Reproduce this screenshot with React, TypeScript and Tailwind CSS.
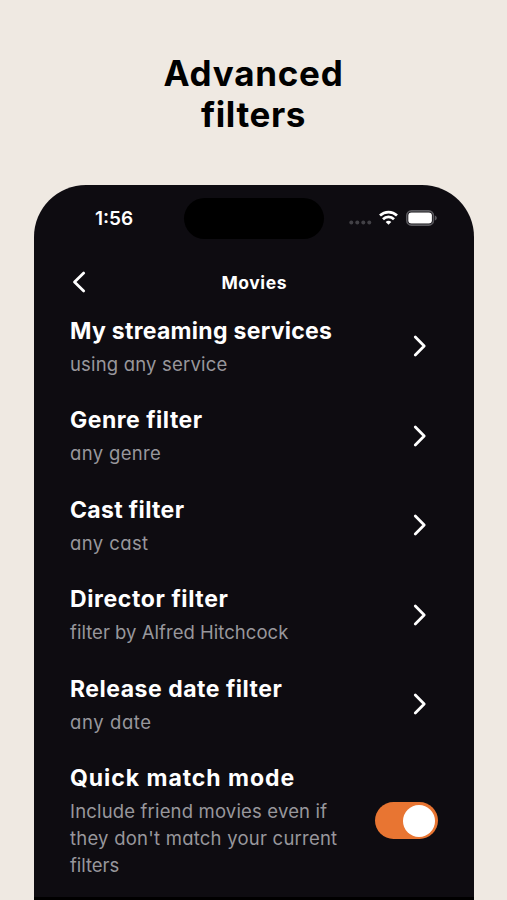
interface Filter {
  title: string;
  titleSpacing: string;
  value: string;
  valueSpacing: string;
}

const filters: Filter[] = [
  { title: 'My streaming services', titleSpacing: 'tracking-[0.28px]', value: 'using any service', valueSpacing: 'tracking-[0.18px]' },
  { title: 'Genre filter', titleSpacing: 'tracking-[0.5px]', value: 'any genre', valueSpacing: 'tracking-[0.35px]' },
  { title: 'Cast filter', titleSpacing: 'tracking-[0.35px]', value: 'any cast', valueSpacing: 'tracking-[0.4px]' },
  { title: 'Director filter', titleSpacing: 'tracking-[0.6px]', value: 'filter by Alfred Hitchcock', valueSpacing: 'tracking-[0.03px]' },
  { title: 'Release date filter', titleSpacing: 'tracking-[0.51px]', value: 'any date', valueSpacing: 'tracking-[0.6px]' },
];

function StatusBar() {
  return (
    <div className="flex h-[41px] items-center">
      <span className="ml-[61px] w-[89px] text-[19px] leading-[41px] font-semibold">1:56</span>
      <div className="h-[41px] w-[140px] rounded-full bg-black" />
      {/* Signal, wifi and battery */}
      <div className="ml-[25px] flex items-center">
        <svg width="23" height="16" viewBox="0 0 23 16" fill="#424146" className="-mt-[2px]">
          <circle cx="2.3" cy="12.5" r="2" />
          <circle cx="8.3" cy="12.5" r="2" />
          <circle cx="14.3" cy="12.5" r="2" />
          <circle cx="20.3" cy="12.5" r="2" />
        </svg>
        <svg width="19" height="15" viewBox="0 0 19 15" className="ml-[7px] -mt-[2px]">
          <g fill="none" stroke="#fff" strokeWidth="2.7">
            <path d="M1 5.5a12.2 12.2 0 0 1 17 0" />
            <path d="M4 9.2a7.7 7.7 0 0 1 11 0" />
          </g>
          <path d="M9.5 14.8 6.7 11.9a3.9 3.9 0 0 1 5.6 0z" fill="#fff" />
        </svg>
        <svg width="31" height="16" viewBox="0 0 31 16" className="ml-[8px] -mt-[2px]">
          <rect x="0.8" y="0.9" width="26.6" height="14.2" rx="4.6" fill="none" stroke="#5a595e" strokeWidth="1.6" />
          <rect x="2.3" y="2.6" width="23.6" height="10.8" rx="3" fill="#fff" />
          <path d="M28.9 5.6c1.3.5 1.9 1.4 1.9 2.4s-.6 1.9-1.9 2.4z" fill="#5a595e" />
        </svg>
      </div>
    </div>
  );
}

function Chevron({ left = false }: { left?: boolean }) {
  return (
    <svg width="14" height="22" viewBox="0 0 14 22" fill="none" stroke="#fff" strokeWidth="2.8" strokeLinecap="round" strokeLinejoin="round" className="-mt-[2px]">
      <path d={left ? 'M11.7 2.1 2.5 11l9.2 8.9' : 'M2.3 2.1 11.2 11l-8.9 8.9'} />
    </svg>
  );
}

export default function App() {
  return (
    <div className="h-[900px] w-full overflow-hidden bg-[#efe9e2] pt-[53px] font-['Inter',sans-serif] text-white">
      <h1 className="flex flex-col items-center text-[35px] leading-[41px] font-bold text-black">
        <span className="tracking-[0.75px]">Advanced</span>
        <span className="tracking-[0.6px]">filters</span>
      </h1>

      {/* Phone */}
      <div className="mt-[49.5px] ml-[34px] h-[715.5px] w-[439.5px] rounded-t-[52px] border-b-3 border-black bg-[#0e0c11] pt-[13.5px]">
        <StatusBar />

        <header className="mt-[31px] flex h-[26px] items-center pr-[37px] pl-[38px]">
          <Chevron left />
          <h2 className="flex-1 pr-[14px] text-center text-[17.5px] font-bold tracking-[0.55px]">Movies</h2>
        </header>

        <div className="mt-[20.5px] flex flex-col gap-[28.5px] px-9">
          {filters.map((f) => (
            <div key={f.title} className="flex items-center justify-between pr-[11px]">
              <div>
                <h3 className={`text-[23px] leading-[29px] font-bold ${f.titleSpacing}`}>{f.title}</h3>
                <p className={`mt-[5px] text-[18.5px] leading-[27px] text-[#98979c] [font-feature-settings:'cv11'] ${f.valueSpacing}`}>{f.value}</p>
              </div>
              <Chevron />
            </div>
          ))}

          <div className="flex items-center justify-between">
            <div>
              <h3 className="text-[23px] leading-[29px] font-bold tracking-[0.95px]">Quick match mode</h3>
              <p className="mt-[5px] flex flex-col text-[18.5px] leading-[27px] whitespace-nowrap text-[#98979c] [font-feature-settings:'cv11']">
                <span className="tracking-[0.17px]">Include friend movies even if</span>
                <span className="tracking-[0.23px]">they don't match your current</span>
                <span className="-tracking-[0.05px]">filters</span>
              </p>
            </div>
            <div className="-mt-[2px] flex h-[37px] w-[63px] items-center justify-end rounded-full bg-[#e87532] pr-[3px]">
              <div className="size-[32px] rounded-full bg-white" />
            </div>
          </div>
        </div>
      </div>
    </div>
  );
}
